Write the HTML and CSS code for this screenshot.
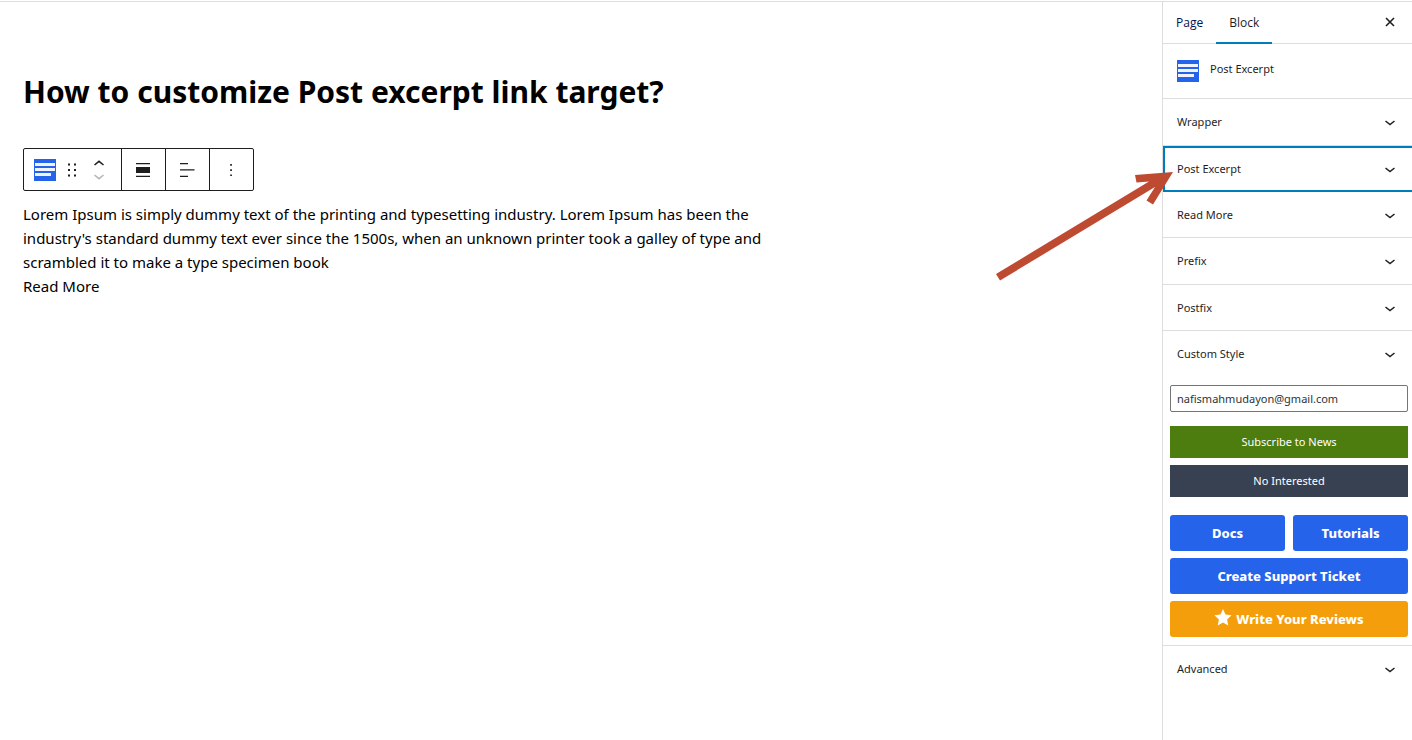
FILE: index.html
```html
<!DOCTYPE html>
<html lang="en">
<head>
<meta charset="utf-8">
<title>Edit Page</title>
<meta name="viewport" content="width=device-width, initial-scale=1">
<link rel="stylesheet" href="styles.css">
</head>
<body>
<svg class="symbols" aria-hidden="true">
  <symbol id="excerpt" viewBox="0 0 22 22"><rect width="22" height="22" fill="#2563eb"/><path d="M1 4h20v3H1zM1 9h20v3H1zM1 14h16v3H1z" fill="#fff" fill-opacity=".92"/></symbol>
  <symbol id="chevron" viewBox="0 0 12 12"><path d="M1.500 5 6 8.600 10.500 5" fill="none" stroke="#1e1e1e" stroke-width="1.500"/></symbol>
</svg>
<div class="editor">
  <main class="canvas">
    <h1 class="title">How to customize Post excerpt link target?</h1>
    <div class="toolbar" role="toolbar" aria-label="Block tools">
      <div class="group group-main">
        <button class="tool" type="button" aria-label="Post Excerpt"><svg width="22" height="22"><use href="#excerpt"/></svg></button>
        <button class="tool" type="button" aria-label="Drag"><svg width="10" height="14" viewBox="0 0 10 14" fill="#1e1e1e"><path d="M1 .5h2v2H1zM7 .5h2v2H7zM1 6h2v2H1zM7 6h2v2H7zM1 11.500h2v2H1zM7 11.500h2v2H7z"/></svg></button>
        <div class="movers">
          <button class="tool" type="button" aria-label="Move up"><svg width="12" height="6" viewBox="0 0 12 6"><path d="M1.500 5 6 1.300 10.500 5" fill="none" stroke="#1e1e1e" stroke-width="1.500"/></svg></button>
          <button class="tool" type="button" aria-label="Move down" disabled><svg width="12" height="6" viewBox="0 0 12 6"><path d="M1.500 1 6 4.700 10.500 1" fill="none" stroke="#b5b5b5" stroke-width="1.500"/></svg></button>
        </div>
      </div>
      <div class="group"><button class="tool" type="button" aria-label="Align"><svg width="14" height="14" viewBox="0 0 14 14"><path d="M0 0h14v1.300H0zM0 4h14v6H0zM0 12.700h14V14H0z" fill="#1e1e1e"/></svg></button></div>
      <div class="group"><button class="tool" type="button" aria-label="Align text"><svg width="16" height="14" viewBox="0 0 16 14"><path d="M1 0h8v1.300H1zM1 6.300h14.500v1.300H1zM1 12.700h8V14H1z" fill="#1e1e1e"/></svg></button></div>
      <div class="group"><button class="tool" type="button" aria-label="Options"><svg width="4" height="14" viewBox="0 0 4 14"><path d="M1.200 1h1.700v1.700H1.200zM1.200 6.200h1.700v1.700H1.200zM1.200 11.400h1.700v1.700H1.200z" fill="#1e1e1e"/></svg></button></div>
    </div>
    <p class="excerpt">Lorem Ipsum is simply dummy text of the printing and typesetting industry. Lorem Ipsum has been the industry's standard dummy text ever since the 1500s, when an unknown printer took a galley of type and scrambled it to make a type specimen book</p>
    <a class="more" href="#">Read More</a>
  </main>
  <aside class="sidebar">
    <div class="tabs">
      <button class="tab tab-page" type="button">Page</button>
      <button class="tab tab-active" type="button">Block</button>
      <button class="close" type="button" aria-label="Close settings"><svg width="10" height="10" viewBox="0 0 10 10"><path d="M1 1l8 8M9 1 1 9" stroke="#1e1e1e" stroke-width="1.600"/></svg></button>
    </div>
    <div class="card"><svg width="22" height="22"><use href="#excerpt"/></svg><h2 class="card-name">Post Excerpt</h2></div>
    <div class="panels">
      <button class="panel" type="button">Wrapper<svg width="12" height="12"><use href="#chevron"/></svg></button>
      <button class="panel panel-focus" type="button">Post Excerpt<svg width="12" height="12"><use href="#chevron"/></svg></button>
      <button class="panel" type="button">Read More<svg width="12" height="12"><use href="#chevron"/></svg></button>
      <button class="panel" type="button">Prefix<svg width="12" height="12"><use href="#chevron"/></svg></button>
      <button class="panel" type="button">Postfix<svg width="12" height="12"><use href="#chevron"/></svg></button>
      <button class="panel panel-last" type="button">Custom Style<svg width="12" height="12"><use href="#chevron"/></svg></button>
    </div>
    <form class="subscribe">
      <input class="email" type="email" aria-label="Email" value="nafismahmudayon@gmail.com">
      <button class="action action-green" type="button">Subscribe to News</button>
      <button class="action action-slate" type="button">No Interested</button>
    </form>
    <nav class="links" aria-label="Help">
      <a class="link" href="#">Docs</a>
      <a class="link" href="#">Tutorials</a>
      <a class="link link-wide" href="#">Create Support Ticket</a>
      <a class="link link-wide link-review" href="#"><svg width="18" height="20" viewBox="0 0 18 20"><path d="M9 0l2.500 5.600 6.100.7-4.500 4.100 1.200 6.100L9 13.500l-5.300 3 1.200-6.100L.4 6.300l6.100-.7z" fill="#fff"/></svg>Write Your Reviews</a>
    </nav>
    <button class="panel panel-advanced" type="button">Advanced<svg width="12" height="12"><use href="#chevron"/></svg></button>
  </aside>
  <svg class="arrow" width="178" height="110" viewBox="0 0 178 110" aria-hidden="true"><path d="M1 103 154 10.500 141.500 11.500 140 4 178 1 158 33.500 151.500 29.500 160 16 5 109.500z" fill="#bf4a32"/></svg>
</div>
</body>
</html>
```
FILE: styles.css
```css
*, *::before, *::after { box-sizing: border-box; }
body { margin: 0; background: #fff; color: #1e1e1e; font: 11px/16px "Noto Sans", "Open Sans", sans-serif; }
button, input { font: inherit; color: inherit; margin: 0; }
button { border: 0; padding: 0; background: none; cursor: pointer; }
a { color: inherit; text-decoration: none; }
svg { display: block; flex: none; }
.symbols { position: absolute; width: 0; height: 0; }

.editor { position: relative; display: flex; min-height: 100vh; border-top: 1px solid transparent; }
.editor::before { content: ""; position: absolute; top: 0; left: 0; right: 0; height: 1px; background: #ddd; }

.canvas { flex: 1; min-width: 0; padding: 67px 23px 24px; color: #000; font: 15px/24px "Noto Sans", sans-serif; }
.title { margin: 0 0 32px; font: 700 30px/48px "Noto Sans", sans-serif; }
.toolbar { display: flex; width: max-content; height: 43px; margin-bottom: 11px; border: 1px solid #1e1e1e; border-radius: 2px; }
.group { display: flex; align-items: center; justify-content: center; width: 44px; padding-right: 2px; border-left: 1px solid #1e1e1e; }
.group-main { width: 97px; gap: 11px; padding-right: 6px; border-left: 0; }
.tool { display: flex; align-items: center; justify-content: center; }
.movers { display: grid; gap: 8px; margin-left: 5px; }
.excerpt { max-width: 760px; margin: 0; }
.more { display: block; }

.sidebar { width: 250px; flex: none; border-left: 1px solid #ddd; }
.tabs { display: flex; height: 43px; border-bottom: 1px solid #ddd; }
.tab { padding: 2px 13px 0; border-bottom: 2px solid transparent; font-family: "Open Sans", sans-serif; font-size: 12px; }
.tab-page { color: #00124f; }
.tab-active, .tab-page { margin-bottom: -1px; }
.tab-active { border-bottom-color: #007cba; }
.close { margin-left: auto; padding: 0 17px; }
.card { display: flex; gap: 11px; height: 55px; padding: 16px 14px; border-bottom: 1px solid #ddd; }
.card-name { margin: 0; font-size: 11px; line-height: 18px; font-weight: 400; }

.panel { display: flex; align-items: center; justify-content: space-between; width: 100%; height: 46px; padding: 0 16px 0 14px; border-bottom: 1px solid #ddd; }
.panel:nth-child(3n + 1) { height: 47px; }
.panel-focus { padding-left: 12px; border: 2px solid #007cba; border-right: 0; }
.panel-last, .panel-advanced { border-bottom: 0; }

.subscribe { display: grid; gap: 7px; padding: 8px 4px 18px 7px; }
.email { width: 100%; height: 27px; margin-bottom: 7px; padding: 0 6px; border: 1px solid #757575; border-radius: 2px; color: #2c3338; background: #fff; }
.action { height: 32px; color: #fff; }
.action-green { background: #4d7c0f; }
.action-slate { background: #374151; }
.links { display: grid; grid-template-columns: 1fr 1fr; gap: 7px 8px; padding: 0 4px 8px 7px; border-bottom: 1px solid #ddd; }
.link { display: flex; align-items: center; justify-content: center; gap: 4px; height: 36px; border-radius: 3px; background: #2563eb; color: #fff; font-size: 13px; font-weight: 800; }
.link-wide { grid-column: 1 / -1; }
.link-review { background: #f59e0b; }

.arrow { position: absolute; top: 170px; right: 239px; }
```
